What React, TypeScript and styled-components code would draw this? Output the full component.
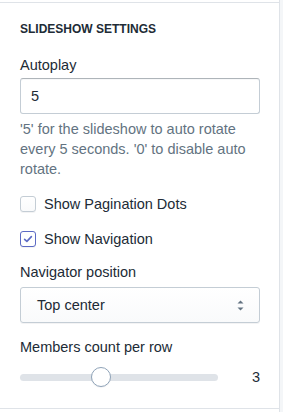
import React, { useState } from "react";
import styled, { createGlobalStyle } from "styled-components";

const GlobalStyle = createGlobalStyle`
  html, body {
    margin: 0;
    padding: 0;
    background: #f4f6f8;
  }
  body {
    font-family: "Liberation Sans", Arial, sans-serif;
    color: #212b36;
    -webkit-font-smoothing: antialiased;
  }
  * { box-sizing: border-box; }
`;

const Panel = styled.div`
  width: 280px;
  height: 412px;
  background: #ffffff;
  border-right: 1px solid #dfe3e8;
  padding-top: 2px;
`;

const Section = styled.section`
  border-top: 1px solid #dfe3e8;
  border-bottom: 1px solid #dfe3e8;
  padding: 18px 19px 21px 20px;
  display: flex;
  flex-direction: column;
`;

const Title = styled.h2`
  margin: 0;
  font-size: 12px;
  line-height: 16px;
  font-weight: 700;
  text-transform: uppercase;
  color: #212b36;
`;

const Label = styled.label<{ $top: number }>`
  display: block;
  margin-top: ${(p) => p.$top}px;
  font-size: 14.5px;
  line-height: 20px;
  color: #212b36;
`;

const TextInput = styled.input`
  margin-top: 3px;
  width: 100%;
  height: 36px;
  border: 1px solid #c4cdd5;
  border-top-color: #aeb4b9;
  border-radius: 3px;
  box-shadow: inset 0 1px 0 0 rgba(99, 115, 129, 0.05);
  padding: 0 10px;
  font-family: inherit;
  font-size: 14.5px;
  color: #212b36;
  background: #ffffff;
  outline: none;
`;

const HelpText = styled.p`
  margin: 5px 0 0;
  font-size: 14.5px;
  line-height: 20px;
  color: #637381;
`;

const CheckRow = styled.label<{ $top: number }>`
  display: flex;
  align-items: center;
  gap: 8px;
  margin-top: ${(p) => p.$top}px;
  height: 20px;
  font-size: 14.5px;
  line-height: 20px;
  color: #212b36;
  cursor: pointer;
`;

const Box = styled.span<{ $checked: boolean }>`
  width: 16px;
  height: 16px;
  border-radius: 3px;
  border: 1px solid ${(p) => (p.$checked ? "#5c6ac4" : "#c4cdd5")};
  background: ${(p) =>
    p.$checked ? "#ffffff" : "linear-gradient(180deg, #ffffff, #f9fafb)"};
  box-shadow: 0 1px 0 0 rgba(22, 29, 37, 0.05);
  display: flex;
  align-items: center;
  justify-content: center;
  flex-shrink: 0;
`;

const SelectBox = styled.div`
  margin-top: 5px;
  height: 36px;
  border: 1px solid #c4cdd5;
  border-radius: 3px;
  background: linear-gradient(180deg, #ffffff, #f9fafb);
  box-shadow: 0 1px 0 0 rgba(22, 29, 37, 0.05);
  display: flex;
  align-items: center;
  justify-content: space-between;
  padding: 0 15px 0 16px;
  font-size: 14.5px;
  color: #212b36;
`;

const SliderRow = styled.div`
  margin-top: 10px;
  height: 20px;
  display: flex;
  align-items: center;
`;

const Track = styled.div`
  position: relative;
  flex: 1;
  height: 7px;
  border-radius: 4px;
  background: #dfe3e8;
`;

const Thumb = styled.span`
  position: absolute;
  top: 50%;
  width: 20px;
  height: 20px;
  margin-left: -10px;
  margin-top: -10px;
  border-radius: 50%;
  background: #ffffff;
  border: 1px solid #8fa3b8;
  box-shadow: 0 1px 1px rgba(22, 29, 37, 0.05);
`;

const Value = styled.output`
  width: 42px;
  text-align: right;
  font-size: 14.5px;
  line-height: 20px;
  color: #212b36;
`;

const Check = ({ checked }: { checked: boolean }) => (
  <Box $checked={checked}>
    {checked && (
      <svg width="12" height="12" viewBox="0 0 12 12" fill="none">
        <path
          d="M2.6 6.3 L4.9 8.4 L9.4 3.6"
          stroke="#5c6ac4"
          strokeWidth="1.6"
          strokeLinecap="round"
          strokeLinejoin="round"
        />
      </svg>
    )}
  </Box>
);

const Carets = () => (
  <svg width="7" height="11" viewBox="0 0 7 11">
    <path d="M3.5 0.5 L6.5 3.5 H0.5 Z" fill="#637381" />
    <path d="M3.5 10.5 L6.5 7.5 H0.5 Z" fill="#637381" />
  </svg>
);

export default function App() {
  const [dots] = useState(false);
  const [nav] = useState(true);
  const min = 1;
  const max = 6;
  const value = 3;
  const pct = ((value - min) / (max - min)) * 100;

  return (
    <>
      <GlobalStyle />
      <Panel>
        <Section>
          <Title>Slideshow settings</Title>
          <Label $top={18}>Autoplay</Label>
          <TextInput defaultValue="5" />
          <HelpText>
            '5' for the slideshow to auto rotate every 5 seconds. '0' to disable
            auto rotate.
          </HelpText>
          <CheckRow $top={15}>
            <Check checked={dots} />
            Show Pagination Dots
          </CheckRow>
          <CheckRow $top={15}>
            <Check checked={nav} />
            Show Navigation
          </CheckRow>
          <Label $top={13}>Navigator position</Label>
          <SelectBox>
            <span>Top center</span>
            <Carets />
          </SelectBox>
          <Label $top={14}>Members count per row</Label>
          <SliderRow>
            <Track>
              <Thumb style={{ left: `calc(10px + (100% - 20px) * ${pct / 100})` }} />
            </Track>
            <Value>{value}</Value>
          </SliderRow>
        </Section>
      </Panel>
    </>
  );
}
